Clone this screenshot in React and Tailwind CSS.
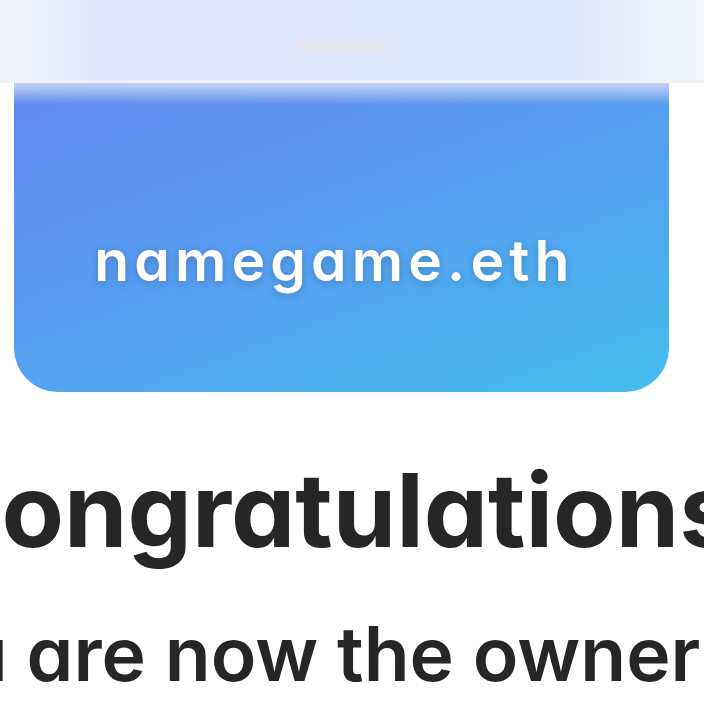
import React from "react";

const font = "font-['Inter',sans-serif] [font-feature-settings:'cv11','ss01']";

const Header = () => (
  <div className="relative h-[80px] w-full bg-[linear-gradient(90deg,#f1f4fd_0%,#e1e5fa_15%,#dde7fa_50%,#dde8fa_82%,#f3f6fd_100%)]">
    <div className="flex h-full items-start justify-center pr-[20px] pt-[40px]">
      <div className="h-[11px] w-[92px] rounded-full bg-[#e4e5ea]" />
    </div>
  </div>
);

const NameCard = ({ name }) => (
  <div className="relative ml-[14px] h-[309px] w-[655px] overflow-hidden rounded-b-[44px] bg-[linear-gradient(160deg,#6189f1_0%,#579cf0_45%,#44bdee_100%)]">
    <div className="absolute inset-x-0 top-0 h-[22px] bg-gradient-to-b from-[#c4d3f4] to-transparent" />
    <div className="flex h-full items-end justify-center pb-[103px] pr-[14px]">
      <span className={`${font} text-[57px] font-semibold leading-none tracking-[0.09em] text-white [text-shadow:0_2px_8px_rgba(0,0,0,0.18)]`}>
        {name}
      </span>
    </div>
  </div>
);

export default function App() {
  return (
    <div className="h-[704px] w-[704px] overflow-hidden bg-white">
      <Header />
      <div className="h-[3px] w-full bg-[#f0f2f7]" />
      <NameCard name="namegame.eth" />
      <div className="flex w-[684px] flex-col items-start pt-[67px]">
        <h1 className={`${font} ml-[-74px] whitespace-nowrap text-[102px] font-bold leading-[102px] text-[#262626]`}>
          Congratulations
        </h1>
        <p className={`${font} ml-[-130px] mt-[55px] whitespace-nowrap text-[75px] font-semibold leading-[75px] text-[#262626]`}>
          You are now the owner
        </p>
      </div>
    </div>
  );
}
